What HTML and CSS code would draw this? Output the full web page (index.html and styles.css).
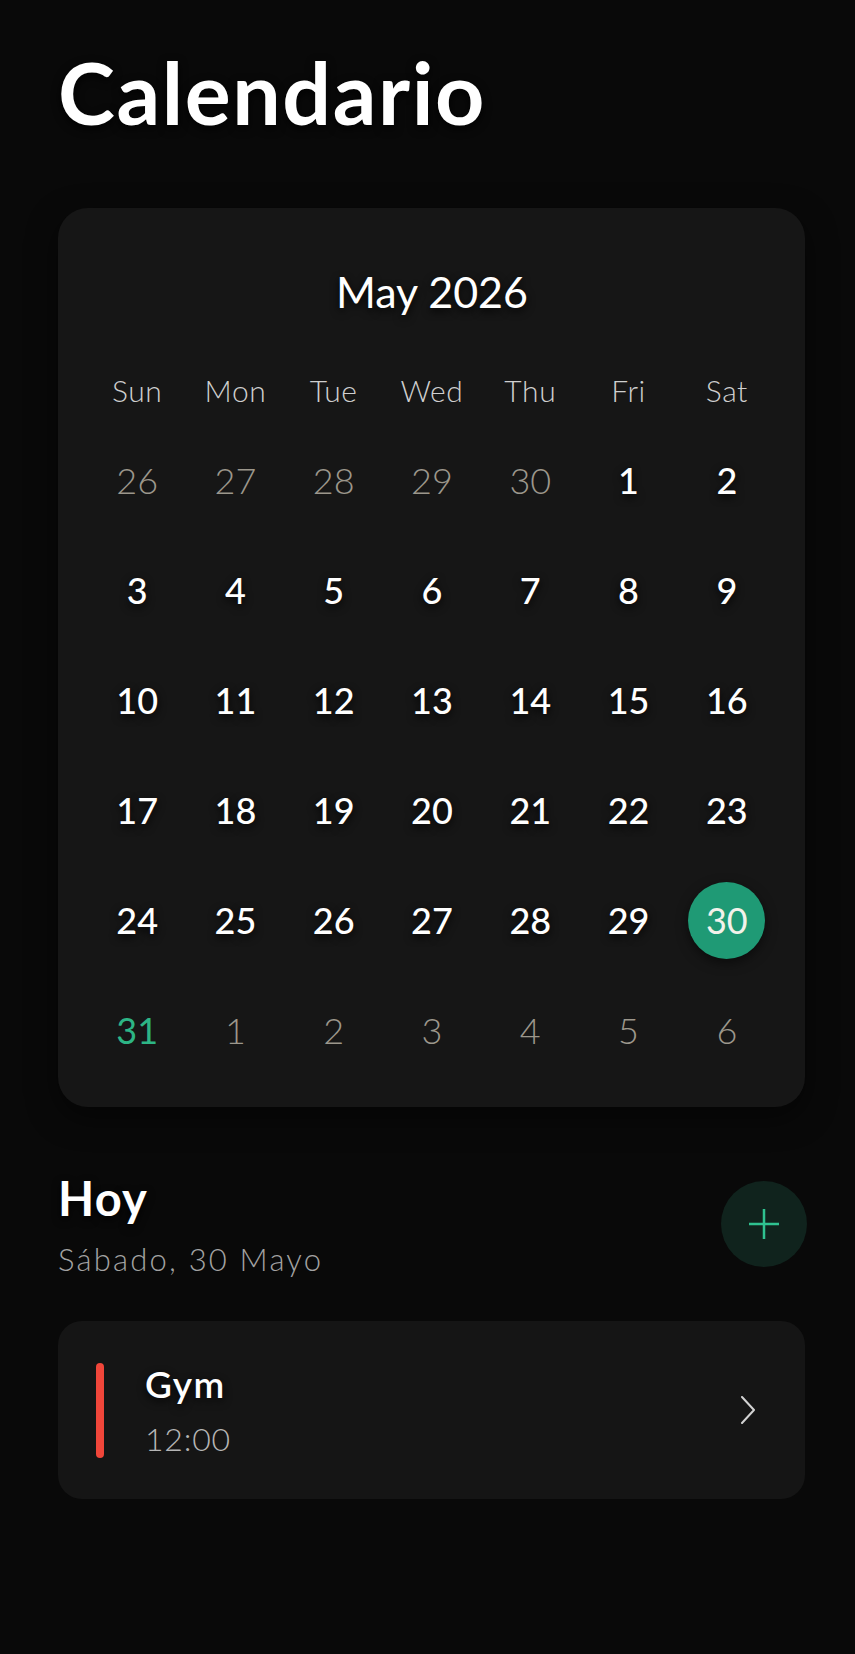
FILE: index.html
```html
<!DOCTYPE html>
<html lang="es">
<head>
<meta charset="utf-8">
<title>Calendario</title>
<link rel="stylesheet" href="styles.css">
</head>
<body>
<main class="page">
  <h1 class="title">Calendario</h1>

  <section class="calendar">
    <div class="month">May 2026</div>
    <div class="grid">
      <div class="wd">Sun</div><div class="wd">Mon</div><div class="wd">Tue</div><div class="wd">Wed</div><div class="wd">Thu</div><div class="wd">Fri</div><div class="wd">Sat</div>

      <div class="day other">26</div><div class="day other">27</div><div class="day other">28</div><div class="day other">29</div><div class="day other">30</div><div class="day">1</div><div class="day">2</div>
      <div class="day">3</div><div class="day">4</div><div class="day">5</div><div class="day">6</div><div class="day">7</div><div class="day">8</div><div class="day">9</div>
      <div class="day">10</div><div class="day">11</div><div class="day">12</div><div class="day">13</div><div class="day">14</div><div class="day">15</div><div class="day">16</div>
      <div class="day">17</div><div class="day">18</div><div class="day">19</div><div class="day">20</div><div class="day">21</div><div class="day">22</div><div class="day">23</div>
      <div class="day">24</div><div class="day">25</div><div class="day">26</div><div class="day">27</div><div class="day">28</div><div class="day">29</div><div class="day"><span class="sel">30</span></div>
      <div class="day green">31</div><div class="day other">1</div><div class="day other">2</div><div class="day other">3</div><div class="day other">4</div><div class="day other">5</div><div class="day other">6</div>
    </div>
  </section>

  <section class="today">
    <div class="today-text">
      <h2 class="today-title">Hoy</h2>
      <div class="today-date">Sábado, 30 Mayo</div>
    </div>
    <button class="add" aria-label="Añadir">
      <svg width="32" height="32" viewBox="0 0 32 32"><path d="M16 1v30M1 16h30" stroke="#2fc190" stroke-width="2.5" fill="none"/></svg>
    </button>
  </section>

  <article class="event">
    <span class="bar"></span>
    <div class="event-text">
      <div class="event-name">Gym</div>
      <div class="event-time">12:00</div>
    </div>
    <svg class="chev" width="16" height="28" viewBox="0 0 16 28"><path d="M2 1l12 13L2 27" stroke="#d2d2d2" stroke-width="2" fill="none" stroke-linecap="round" stroke-linejoin="round"/></svg>
  </article>
</main>
</body>
</html>
```

FILE: styles.css
```css
* { box-sizing: border-box; }
html, body { margin: 0; padding: 0; }
body {
  background: #090909;
  color: #ffffff;
  font-family: Lato, "Open Sans", "Liberation Sans", sans-serif;
  min-height: 1654px;
}
.page {
  padding: 40px 50px 0 58px;
}
.title {
  margin: 0;
  font-size: 86px;
  line-height: 104px;
  font-weight: 700;
  letter-spacing: 1.6px;
  text-shadow: 0 3px 10px rgba(0,0,0,0.9);
}
.calendar {
  margin-top: 64px;
  background: #161616;
  border-radius: 30px;
  padding: 58px 29px 22px 30px;
  box-shadow: 0 10px 30px rgba(0,0,0,0.5);
}
.month {
  text-align: center;
  font-size: 43px;
  line-height: 52px;
  font-weight: 400;
  text-shadow: 0 3px 8px rgba(0,0,0,0.9);
}
.grid {
  margin-top: 37px;
  display: grid;
  grid-template-columns: repeat(7, 1fr);
  grid-template-rows: 70px repeat(6, 110px);
}
.wd {
  display: flex;
  align-items: center;
  justify-content: center;
  font-size: 30px;
  font-weight: 300;
  letter-spacing: 0.6px;
  color: #cfcfcf;
}
.day {
  display: flex;
  align-items: center;
  justify-content: center;
  font-size: 36px;
  font-weight: 500;
  color: #ffffff;
  text-shadow: 0 3px 8px rgba(0,0,0,0.9);
}
.day.other {
  font-weight: 300;
  color: #9c978c;
  text-shadow: none;
}
.day.green {
  font-weight: 400;
  color: #2db585;
  text-shadow: none;
}
.sel {
  width: 77px;
  height: 77px;
  border-radius: 50%;
  background: #1f9a75;
  display: flex;
  align-items: center;
  justify-content: center;
  font-weight: 400;
  color: #f2f2ea;
  text-shadow: none;
  box-shadow: 0 4px 12px rgba(0,0,0,0.5);
}
.today {
  margin-top: 63px;
  display: flex;
  align-items: center;
  justify-content: space-between;
}
.today-title {
  margin: 0;
  font-size: 47px;
  line-height: 56px;
  font-weight: 700;
  letter-spacing: 1.2px;
  text-shadow: 0 3px 8px rgba(0,0,0,0.9);
}
.today-date {
  margin-top: 14px;
  font-size: 31px;
  line-height: 38px;
  font-weight: 300;
  letter-spacing: 2.2px;
  color: #a3a3a3;
}
.add {
  width: 86px;
  height: 86px;
  border-radius: 50%;
  border: 0;
  padding: 0;
  margin-right: -2px;
  background: #10231d;
  display: flex;
  align-items: center;
  justify-content: center;
}
.event {
  margin-top: 43px;
  height: 178px;
  background: #151515;
  border-radius: 24px;
  display: flex;
  align-items: center;
  padding: 0 49px 0 38px;
}
.bar {
  width: 8px;
  height: 95px;
  border-radius: 4px;
  background: #f0463a;
  flex: none;
}
.event-text {
  margin-left: 41px;
  flex: 1;
}
.event-name {
  font-size: 37px;
  line-height: 44px;
  font-weight: 600;
  letter-spacing: 1.5px;
  text-shadow: 0 3px 8px rgba(0,0,0,0.9);
}
.event-time {
  margin-top: 14px;
  font-size: 32px;
  line-height: 38px;
  font-weight: 300;
  letter-spacing: 0.8px;
  color: #b5b5b5;
}
.chev { flex: none; }
```
